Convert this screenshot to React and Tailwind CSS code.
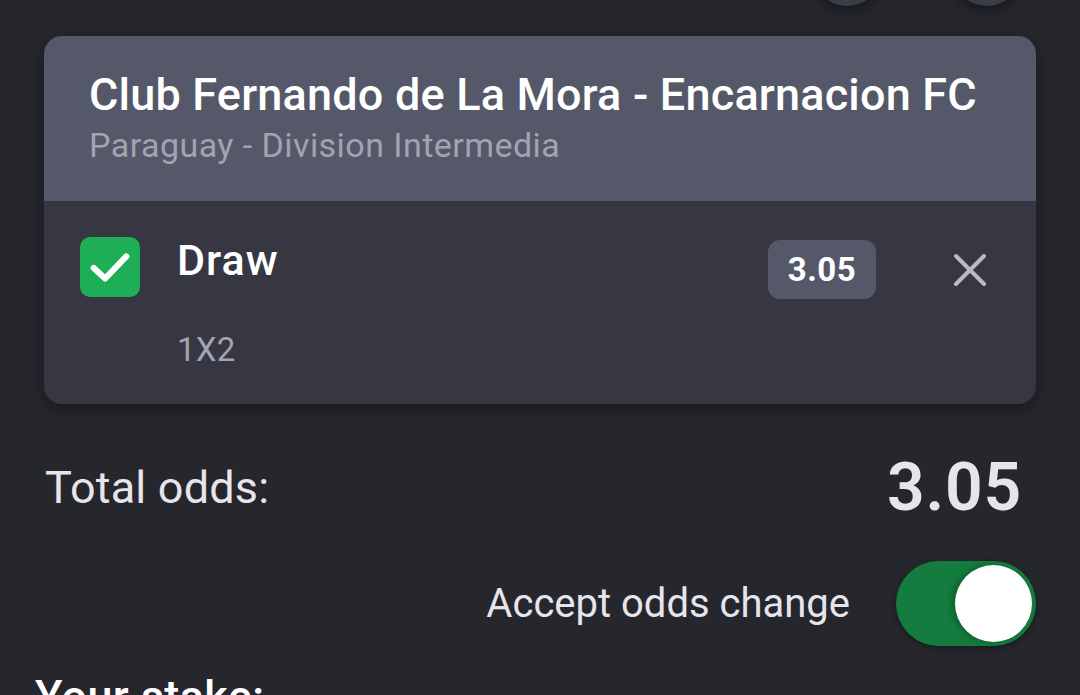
import React from "react";

export default function App() {
  return (
    <div
      className="w-[1080px] h-[695px] overflow-hidden bg-[#25272d] relative"
      style={{ fontFamily: "Roboto, 'Noto Sans', sans-serif" }}
    >
      {/* top action buttons (cut off) */}
      <div className="flex justify-end gap-[70px] pr-[58px] h-0">
        <div className="w-[70px] h-[70px] rounded-full bg-[#3a3c47] -mt-[64px] shadow-[0_4px_14px_rgba(0,0,0,0.45)]" />
        <div className="w-[70px] h-[70px] rounded-full bg-[#3a3c47] -mt-[64px] shadow-[0_4px_14px_rgba(0,0,0,0.45)]" />
      </div>

      <div className="pt-[36px] px-[44px]">
        {/* bet card */}
        <div className="rounded-[18px] overflow-hidden shadow-[0_6px_16px_rgba(0,0,0,0.35)]">
          <div className="bg-[#555869] h-[165px] pl-[45px] pt-[34px]">
            <div className="text-white text-[45px] font-medium leading-[50px] tracking-[0.2px] whitespace-nowrap">
              Club Fernando de La Mora - Encarnacion FC
            </div>
            <div className="text-[#a1a3b0] text-[34px] leading-[40px] mt-[5px] tracking-[0.45px] whitespace-nowrap">
              Paraguay - Division Intermedia
            </div>
          </div>
          <div className="bg-[#363743] h-[203px] flex pl-[36px] pr-[49px] pt-[36px]">
            <div className="w-[60px] h-[60px] rounded-[10px] bg-[#1eae55] flex items-center justify-center shrink-0">
              <svg width="46" height="46" viewBox="0 0 24 24" fill="none">
                <path
                  d="M3.5 12.5 L9.5 18 L20.5 6.5"
                  stroke="white"
                  strokeWidth="3.2"
                  strokeLinecap="round"
                  strokeLinejoin="round"
                />
              </svg>
            </div>
            <div className="ml-[37px] flex-1 flex flex-col">
              <div className="text-white text-[43px] font-medium leading-[50px] -mt-[2px] tracking-[1px]">
                Draw
              </div>
              <div className="text-[#a3a4b0] text-[33px] leading-[40px] mt-[45px] tracking-[0.3px]">
                1X2
              </div>
            </div>
            <div className="flex items-start">
              <div className="mt-[3px] h-[59px] w-[108px] rounded-[12px] bg-[#555869] flex items-center justify-center text-white text-[33px] font-bold tracking-[0.5px]">
                3.05
              </div>
              <div className="ml-[77px] mt-[16px] w-[34px] h-[34px] flex items-center justify-center">
                <svg width="34" height="34" viewBox="0 0 34 34" fill="none">
                  <path
                    d="M3 3 L31 31 M31 3 L3 31"
                    stroke="#b9bac2"
                    strokeWidth="4"
                    strokeLinecap="round"
                  />
                </svg>
              </div>
            </div>
          </div>
        </div>

        {/* total odds */}
        <div className="flex items-center justify-between mt-[50px] pl-[1px] pr-[14px] h-[68px]">
          <div className="text-[#e7e4ec] text-[45px] leading-[50px] tracking-[0.2px]">Total odds:</div>
          <div className="text-[#e7e4ec] text-[66px] font-semibold leading-[70px] tracking-[0.8px]">3.05</div>
        </div>

        {/* accept odds change */}
        <div className="flex items-center justify-end mt-[39px]">
          <div className="text-[#e7e4ec] text-[40px] leading-[48px] mr-[46px]">Accept odds change</div>
          <div className="w-[140px] h-[85px] rounded-full bg-[#137c3e] flex items-center justify-end pr-[4px] shadow-[0_2px_6px_rgba(0,0,0,0.35)]">
            <div className="w-[77px] h-[77px] rounded-full bg-white shadow-[-3px_0_6px_rgba(0,0,0,0.25)]" />
          </div>
        </div>

        {/* your stake */}
        <div className="text-white text-[45px] font-medium leading-[50px] mt-[26px] -ml-[9px] tracking-[0.4px]">
          Your stake:
        </div>
      </div>
    </div>
  );
}
